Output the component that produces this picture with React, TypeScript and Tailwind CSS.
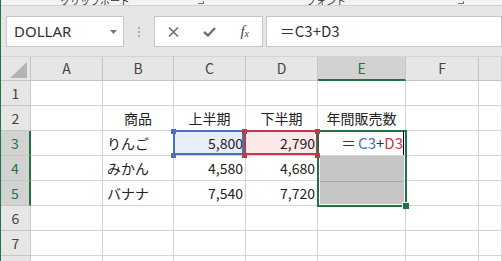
import React from "react";

const colW = ["w-[72px]", "w-[71px]", "w-[72px]", "w-[72px]", "w-[88px]", "w-[73px]", "flex-1"];
const letters = ["A", "B", "C", "D", "E", "F", ""];

type Cell = { t?: React.ReactNode; a?: "l" | "c" | "r"; bg?: string };

function Row({ n, sel, cells = [] }: { n?: number; sel?: boolean; cells?: Cell[] }) {
  return (
    <div className="flex h-[25px]">
      <div
        className={`flex w-[30px] shrink-0 items-center justify-center border-b border-[#c6c6c6] text-[14px] ${
          sel ? "border-r-2 border-r-[#217346] bg-[#d2d2d2] text-[#217346]" : "border-r bg-[#e6e6e6] text-[#444]"
        }`}
      >
        {n}
      </div>
      {colW.map((w, i) => {
        const c = cells[i] ?? {};
        const align = c.a === "r" ? "justify-end pr-[2px]" : c.a === "c" ? "justify-center" : "pl-[4px]";
        return (
          <div
            key={i}
            className={`flex shrink-0 items-center whitespace-nowrap border-b border-r border-[#d4d4d4] text-[14px] text-[#222] ${w} ${align} ${c.bg ?? "bg-white"}`}
          >
            {c.t}
          </div>
        );
      })}
    </div>
  );
}

export default function App() {
  return (
    <div className="relative h-[261px] w-[502px] overflow-hidden border-l border-[#217346] bg-[#e6e6e6] font-['Noto_Sans_CJK_JP','Noto_Sans',sans-serif]">
      {/* ribbon bottom, cut off */}
      <div className="flex h-[6px] items-end overflow-hidden border-b border-[#d2d2d2] bg-[#f3f3f3] text-[10px] leading-none text-[#333]">
        <span className="ml-[59px] -mb-[1px]">クリップボード</span>
        <span className="ml-[68px] mb-[1px] h-[3px] w-[6px] border-b border-r border-[#777]" />
        <span className="ml-[102px] -mb-[1px]">フォント</span>
        <span className="ml-[112px] mb-[1px] h-[3px] w-[6px] border-b border-r border-[#777]" />
      </div>

      {/* formula bar */}
      <div className="flex h-[50px] items-start pt-[10px]">
        <div className="ml-[5px] flex h-[31px] w-[120px] items-center justify-between border border-[#c6c6c6] bg-white pl-[7px] pr-[6px]">
          <span className="font-['Noto_Sans',sans-serif] text-[15px] text-[#333]">DOLLAR</span>
          <svg width="7" height="4" viewBox="0 0 7 4">
            <polygon points="0,0 7,0 3.5,4" fill="#777" />
          </svg>
        </div>
        <div className="flex h-[31px] w-[30px] flex-col items-center justify-center gap-[2px]">
          <span className="h-[2px] w-[2px] bg-[#b0b0b0]" />
          <span className="h-[2px] w-[2px] bg-[#b0b0b0]" />
          <span className="h-[2px] w-[2px] bg-[#b0b0b0]" />
        </div>
        <div className="flex h-[31px] w-[110px] items-center border border-[#c6c6c6] bg-white">
          <span className="flex w-[37px] justify-center">
            <svg width="11" height="10" viewBox="0 0 11 10">
              <path d="M1 0.5 L10 9.5 M10 0.5 L1 9.5" stroke="#707070" strokeWidth="1.6" />
            </svg>
          </span>
          <span className="flex w-[36px] justify-center">
            <svg width="13" height="10" viewBox="0 0 13 10">
              <path d="M1 5 L5 8.5 L12 1" stroke="#707070" strokeWidth="2.4" fill="none" />
            </svg>
          </span>
          <span className="flex w-[34px] items-baseline justify-center font-['Liberation_Serif',serif] text-[15px] italic leading-none text-[#444]">
            f<span className="relative top-[1px] text-[10px]">x</span>
          </span>
        </div>
        <div className="ml-[3px] flex h-[31px] w-[240px] items-center border border-[#c6c6c6] bg-white pl-[13px] text-[15px] text-[#333]">
          ＝C3+D3
        </div>
      </div>

      {/* sheet */}
      <div className="relative border-t border-[#d4d4d4]">
        <div className="flex h-[24px]">
          <div className="flex w-[30px] shrink-0 items-end justify-end border-b border-r border-[#c6c6c6] bg-[#e6e6e6] pb-[2px] pr-[3px]">
            <svg width="17" height="16" viewBox="0 0 17 16">
              <polygon points="17,0 17,16 0,16" fill="#b4b4b4" />
            </svg>
          </div>
          {colW.map((w, i) => (
            <div
              key={i}
              className={`flex shrink-0 items-center justify-center border-r border-[#c6c6c6] text-[14px] ${w} ${
                letters[i] === "E"
                  ? "border-b-2 border-b-[#217346] bg-[#d2d2d2] text-[#217346]"
                  : "border-b bg-[#e6e6e6] text-[#444]"
              }`}
            >
              {letters[i]}
            </div>
          ))}
        </div>

        <Row n={1} />
        <Row
          n={2}
          cells={[{}, { t: "商品", a: "c" }, { t: "上半期", a: "c" }, { t: "下半期", a: "c" }, { t: "年間販売数", a: "c" }]}
        />
        <Row
          n={3}
          sel
          cells={[
            {},
            { t: "りんご" },
            { t: "5,800", a: "r", bg: "bg-[#e7eef9]" },
            { t: "2,790", a: "r", bg: "bg-[#fbe8ea]" },
            {
              t: (
                <span className="text-[15px] text-[#333]">
                  <span className="mr-[2px]">＝</span>
                  <span className="text-[#4472c4]">C3</span>+<span className="text-[#c0394a]">D3</span>
                </span>
              ),
              a: "r",
            },
          ]}
        />
        <Row n={4} sel cells={[{}, { t: "みかん" }, { t: "4,580", a: "r" }, { t: "4,680", a: "r" }]} />
        <Row n={5} sel cells={[{}, { t: "バナナ" }, { t: "7,540", a: "r" }, { t: "7,720", a: "r" }]} />
        <Row n={6} />
        <Row n={7} />
        <Row />

        {/* reference highlights */}
        <div className="absolute left-[172px] top-[73px] h-[25px] w-[71px] border-2 border-[#4472c4]" />
        <div className="absolute left-[170px] top-[72px] h-[5px] w-[5px] bg-[#4472c4]" />
        <div className="absolute left-[170px] top-[96px] h-[5px] w-[5px] bg-[#4472c4]" />
        <div className="absolute left-[243px] top-[73px] h-[25px] w-[74px] border-2 border-[#c0394a]" />

        {/* selected range E3:E5 */}
        <div className="absolute left-[319px] top-[99px] flex h-[48px] w-[84px] flex-col">
          <div className="h-[26px] border-b border-[#a9a9a9] bg-[#c6c6c6]" />
          <div className="flex-1 bg-[#c6c6c6]" />
        </div>
        <div className="absolute left-[316px] top-[73px] h-[77px] w-[90px] border-2 border-[#217346]" />
        <div className="absolute left-[402px] top-[74px] h-[24px] w-[1px] bg-black" />
        <div className="absolute left-[401px] top-[145px] h-[7px] w-[7px] border-l border-t border-white bg-[#217346]" />

        <div className="absolute left-[241px] top-[72px] h-[5px] w-[5px] bg-[#c0394a]" />
        <div className="absolute left-[241px] top-[96px] h-[5px] w-[5px] bg-[#c0394a]" />
        <div className="absolute left-[314px] top-[72px] h-[5px] w-[5px] bg-[#c0394a]" />
        <div className="absolute left-[314px] top-[96px] h-[5px] w-[5px] bg-[#c0394a]" />
      </div>
    </div>
  );
}
